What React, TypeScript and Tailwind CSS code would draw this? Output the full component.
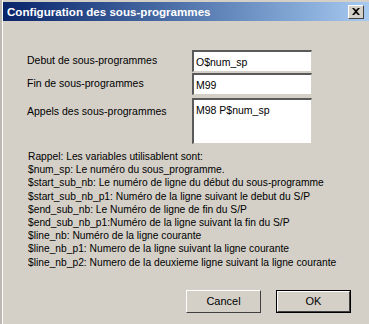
const rappel = [
  "Rappel: Les variables utilisablent sont:",
  "$num_sp: Le numéro du sous_programme.",
  "$start_sub_nb: Le numéro de ligne du début du sous-programme",
  "$start_sub_nb_p1: Numéro de la ligne suivant le debut du S/P",
  "$end_sub_nb: Le Numéro de ligne de fin du S/P",
  "$end_sub_nb_p1:Numéro de la ligne suivant la fin du S/P",
  "$line_nb: Numéro de la ligne courante",
  "$line_nb_p1: Numero de la ligne suivant la ligne courante",
  "$line_nb_p2: Numero de la deuxieme ligne suivant la ligne courante",
];

function Field({ value, tall }: { value: string; tall?: boolean }) {
  return (
    <div
      className={`w-[120px] ${tall ? "h-[46px]" : "h-[22px]"} bg-white border-t-2 border-l-2 border-t-[#5a5a5a] border-l-[#5a5a5a] border-r border-b border-r-[#d4d0c8] border-b-[#d4d0c8] px-[2px] pt-[3px] text-[10.5px] leading-[14px] text-black`}
    >
      {value}
    </div>
  );
}

function Button({ label, primary }: { label: string; primary?: boolean }) {
  return (
    <div className={`w-[75px] h-[23px] ${primary ? "border border-black" : ""}`}>
      <div className="w-full h-full border-t border-l border-t-white border-l-white border-r border-b border-r-[#404040] border-b-[#404040] flex items-center justify-center text-[11px] text-black">
        {label}
      </div>
    </div>
  );
}

export default function App() {
  return (
    <div className="w-[369px] h-[324px] bg-[#d4d0c8] flex overflow-hidden" style={{ fontFamily: '"Liberation Sans", Arial, sans-serif' }}>
      <div className="w-[2px] bg-[#bcb8b0]" />
      <div className="flex-1 border-l border-white flex flex-col pt-[2px]">
        <div className="h-[19px] bg-gradient-to-r from-[#0a246a] to-[#a6caf0] flex items-center pl-[4px] pr-[5px]">
          <span className="flex-1 text-white font-bold text-[11.6px] leading-none">Configuration des sous-programmes</span>
          <div className="w-[16px] h-[14px] bg-[#d4d0c8] border-t border-l border-white border-r border-b border-r-[#404040] border-b-[#404040] flex items-center justify-center">
            <svg width="8" height="7" viewBox="0 0 8 7">
              <path d="M0 0 L2 0 L4 2 L6 0 L8 0 L5 3.5 L8 7 L6 7 L4 5 L2 7 L0 7 L3 3.5 Z" fill="#000" />
            </svg>
          </div>
        </div>

        <div className="pl-[24px] pt-[29px] text-[10.5px] text-black">
          <div className="flex items-center">
            <span className="w-[165px]">Debut de sous-programmes</span>
            <Field value="O$num_sp" />
          </div>
          <div className="flex items-center mt-[1px]">
            <span className="w-[165px]">Fin de sous-programmes</span>
            <Field value="M99" />
          </div>
          <div className="flex items-start mt-[3px]">
            <span className="w-[165px] pt-[6px]">Appels des sous-programmes</span>
            <Field value="M98 P$num_sp" tall />
          </div>

          <div className="mt-[6px] pl-[1px] leading-[13.2px] whitespace-nowrap text-[10.25px]">
            {rappel.map((line) => (
              <div key={line}>{line}</div>
            ))}
          </div>
        </div>

        <div className="flex justify-end gap-[15px] mt-auto mb-[11px] pr-[18px]">
          <Button label="Cancel" />
          <Button label="OK" primary />
        </div>
      </div>
    </div>
  );
}
